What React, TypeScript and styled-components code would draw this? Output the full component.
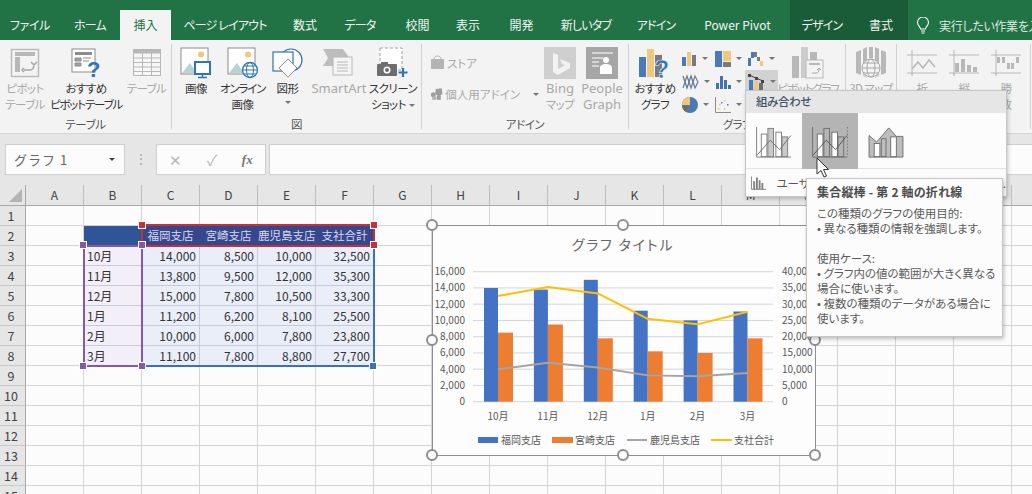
import React from "react";
import styled, { createGlobalStyle } from "styled-components";

const FONT = `"Noto Sans CJK JP", "Noto Sans", sans-serif`;

const Global = createGlobalStyle`
  html, body { margin: 0; padding: 0; background: #fff; }
  body { font-family: ${FONT}; font-feature-settings: "palt"; }
  * { box-sizing: border-box; }
`;

const Page = styled.div`
  position: relative;
  width: 1032px;
  height: 494px;
  overflow: hidden;
  background: #fcfcfc;
  color: #333;
`;

/* ---------- title tabs ---------- */
const TabBar = styled.div`
  display: flex;
  height: 40px;
  background: #217346;
  color: #f0f5f2;
  font-size: 12px;
  overflow: hidden;
`;
const Tab = styled.div<{ $w: number; $active?: boolean; $ctx?: boolean; $gap?: number; $ls?: number }>`
  flex: none;
  width: ${(p) => p.$w}px;
  margin-right: ${(p) => p.$gap ?? 0}px;
  letter-spacing: ${(p) => p.$ls ?? -0.8}px;
  padding-top: 10px;
  height: 40px;
  line-height: 30px;
  text-align: center;
  white-space: nowrap;
  ${(p) => (p.$active ? "background:linear-gradient(#217346 10px,#f3f3f3 10px);color:#217346;" : "")}
  ${(p) => (p.$ctx ? "background:#1b5c38;" : "")}
`;
const TellMe = styled.div`
  flex: none;
  display: flex;
  align-items: center;
  gap: 9px;
  margin-left: 8px;
  height: 40px;
  padding-top: 10px;
  white-space: nowrap;
  letter-spacing: -0.3px;
  color: #dce8e1;
`;

/* ---------- ribbon ---------- */
const Ribbon = styled.div`
  display: flex;
  height: 94px;
  background: #f3f3f3;
  border-bottom: 1px solid #d6d6d6;
  font-size: 12px;
`;
const Group = styled.div<{ $w: number; $pad?: number }>`
  width: ${(p) => p.$w}px;
  flex: none;
  height: 85px;
  margin-top: 4px;
  padding-left: ${(p) => p.$pad ?? 0}px;
  display: flex;
  flex-direction: column;
  border-right: 1px solid #d0d0d0;
`;
const GroupBody = styled.div`
  display: flex;
  flex: 1;
  min-height: 0;
`;
const GroupLabel = styled.div`
  flex: none;
  height: 16px;
  margin-bottom: -3px;
  line-height: 16px;
  text-align: center;
  font-size: 11.5px;
  letter-spacing: -0.4px;
  color: #555;
`;
const BigButton = styled.div<{ $w: number; $off?: boolean }>`
  width: ${(p) => p.$w}px;
  flex: none;
  display: grid;
  grid-template-columns: 100%;
  grid-template-rows: 34px;
  grid-auto-rows: 16px;
  justify-items: center;
  align-content: start;
  padding-top: 2px;
  color: ${(p) => (p.$off ? "#a8a8a8" : "#333")};
  line-height: 16px;
  font-size: 11.5px;
  letter-spacing: -0.55px;
  white-space: nowrap;
  svg { display: block; align-self: center; }
`;
const LatinLabel = styled.div`
  font-family: "Noto Sans", sans-serif;
  font-size: 13px;
  letter-spacing: 0;
`;
const TightLabel = styled.div`
  letter-spacing: -1.2px;
`;
const Stack = styled.div`
  width: 117px;
  flex: none;
  display: flex;
  flex-direction: column;
  gap: 13px;
  padding: 10px 0 0 8px;
  color: #a8a8a8;
  font-size: 11.5px;
`;
const StackRow = styled.div`
  display: flex;
  align-items: center;
  gap: 2px;
  height: 18px;
  white-space: nowrap;
`;
const Caret = styled.span<{ $ml?: number; $dark?: boolean }>`
  display: inline-block;
  width: 0;
  height: 0;
  margin-left: ${(p) => p.$ml ?? 5}px;
  border-left: 3px solid transparent;
  border-right: 3px solid transparent;
  border-top: 3px solid ${(p) => (p.$dark ? "#444" : "#777")};
  flex: none;
  vertical-align: middle;
`;
const ShapeCaret = styled.div`
  line-height: 10px;
`;
const SmallGrid = styled.div`
  flex: none;
  display: grid;
  grid-template-columns: repeat(3, 33px);
  grid-auto-rows: 23px;
  margin: 3px 0 0 -2px;
  align-content: start;
`;
const SmallBtn = styled.div<{ $on?: boolean }>`
  display: flex;
  align-items: center;
  padding-left: 3px;
  height: 23px;
  ${(p) => (p.$on ? "background:#d2d2d2;" : "")}
`;

/* ---------- formula bar ---------- */
const FormulaBar = styled.div`
  display: flex;
  align-items: flex-start;
  height: 51px;
  background: #e6e6e6;
  padding: 10px 0 0 5px;
`;
const NameBox = styled.div`
  display: flex;
  align-items: center;
  justify-content: space-between;
  width: 120px;
  height: 31px;
  padding: 0 9px 0 8px;
  background: #fcfcfc;
  border: 1px solid #cfcfcf;
  font-size: 13px;
  font-feature-settings: normal;
  letter-spacing: 1px;
  color: #666;
`;
const Dots = styled.div`
  width: 31px;
  height: 31px;
  text-align: center;
  line-height: 28px;
  color: #a5a5a5;
  font-size: 12px;
`;
const FxBox = styled.div`
  display: flex;
  align-items: center;
  justify-content: space-around;
  width: 110px;
  height: 31px;
  background: #fcfcfc;
  border: 1px solid #cfcfcf;
  color: #b5b5b5;
  font-size: 15px;
`;
const FxLabel = styled.span`
  font-family: "Liberation Serif", serif;
  font-style: italic;
  font-weight: bold;
  font-size: 13px;
  color: #777;
`;
const FormulaInput = styled.div`
  flex: 1;
  height: 31px;
  margin-left: 3px;
  background: #fcfcfc;
  border: 1px solid #cfcfcf;
  border-right: none;
`;

/* ---------- sheet ---------- */
const Sheet = styled.div`
  display: grid;
  grid-template-columns: 26px repeat(18, 58px);
  grid-template-rows: 21px;
  grid-auto-rows: 20px;
  font-size: 12px;
`;
const Corner = styled.div`
  position: relative;
  background: #e6e6e6;
  border-right: 1px solid #a9a9a9;
  border-bottom: 1px solid #a9a9a9;
  &::after {
    content: "";
    position: absolute;
    right: 3px;
    bottom: 3px;
    width: 0;
    height: 0;
    border-left: 13px solid transparent;
    border-bottom: 13px solid #b4b4b4;
  }
`;
const ColHead = styled.div`
  background: #e6e6e6;
  border-right: 1px solid #bdbdbd;
  border-bottom: 1px solid #a9a9a9;
  text-align: center;
  line-height: 20px;
  font-size: 12px;
  color: #444;
`;
const RowHead = styled.div`
  background: #e6e6e6;
  border-right: 1px solid #a9a9a9;
  border-bottom: 1px solid #c8c8c8;
  text-align: center;
  line-height: 20px;
  font-size: 12.5px;
  padding-right: 3px;
  color: #444;
`;
type Kind = "none" | "blank" | "head" | "month" | "num";
const Cell = styled.div<{ $k: Kind }>`
  border-right: 1px solid ${(p) => (p.$k === "month" || p.$k === "num" ? "#c6cbd8" : "#d4d4d4")};
  border-bottom: 1px solid ${(p) => (p.$k === "month" || p.$k === "num" ? "#c6cbd8" : "#d4d4d4")};
  line-height: 19px;
  white-space: nowrap;
  color: #333;
  ${(p) => p.$k === "blank" && "background:#2f5597;border-color:#2f5597;"}
  ${(p) => p.$k === "head" && "background:#36478c;border-color:#36478c;color:#d4d9ea;text-align:center;font-size:11.5px;"}
  ${(p) => p.$k === "month" && "background:#f3eff8;padding-left:3px;"}
  ${(p) => p.$k === "num" && "background:#e9eef9;text-align:right;padding-right:3px;"}
`;

/* range highlights over the cells */
const Range = styled.div<{ $c: string; $x: number; $y: number; $w: number; $h: number }>`
  position: absolute;
  left: ${(p) => p.$x}px;
  top: ${(p) => p.$y}px;
  width: ${(p) => p.$w}px;
  height: ${(p) => p.$h}px;
  border: 2px solid ${(p) => p.$c};
`;
const Grip = styled.div<{ $c: string; $x: number; $y: number }>`
  position: absolute;
  left: ${(p) => p.$x - 4}px;
  top: ${(p) => p.$y - 4}px;
  width: 8px;
  height: 8px;
  background: ${(p) => p.$c};
  border: 1px solid #fff;
`;

/* ---------- chart ---------- */
const ChartBox = styled.div`
  position: absolute;
  left: 432px;
  top: 225px;
  width: 384px;
  height: 231px;
  background: #fdfdfd;
  border: 1.5px solid #8e8e8e;
  svg { position: absolute; left: -1.5px; top: -1.5px; display: block; overflow: visible; }
`;
const Knob = styled.div<{ $x: number; $y: number }>`
  position: absolute;
  left: ${(p) => p.$x - 6}px;
  top: ${(p) => p.$y - 6}px;
  width: 12px;
  height: 12px;
  border-radius: 50%;
  background: #fdfdfd;
  border: 2px solid #8e8e8e;
`;

/* ---------- gallery dropdown ---------- */
const Menu = styled.div`
  position: absolute;
  left: 745px;
  top: 90px;
  width: 262px;
  height: 107px;
  background: #fcfcfc;
  border: 1px solid #c6c6c6;
  box-shadow: 1px 2px 4px rgba(0, 0, 0, 0.22);
  display: flex;
  flex-direction: column;
`;
const MenuHead = styled.div`
  height: 22px;
  line-height: 21px;
  padding-left: 10px;
  background: #e6e6e6;
  color: #44546a;
  font-size: 11.5px;
  letter-spacing: -0.4px;
  font-weight: 500;
`;
const MenuRow = styled.div`
  display: flex;
  padding-left: 0;
  height: 56px;
  border-bottom: 1px solid #e2e2e2;
`;
const MenuCell = styled.div<{ $on?: boolean }>`
  width: 56px;
  height: 56px;
  display: flex;
  align-items: center;
  justify-content: center;
  padding-top: 3px;
  ${(p) => (p.$on ? "background:#b4b4b4;" : "")}
`;
const MenuFoot = styled.div`
  display: flex;
  align-items: center;
  gap: 10px;
  height: 27px;
  padding-left: 5px;
  font-size: 11.5px;
  white-space: nowrap;
  color: #555;
  overflow: hidden;
`;
const Tip = styled.div`
  position: absolute;
  left: 806px;
  top: 178px;
  width: 197px;
  height: 159px;
  padding: 5px 10px;
  background: #fcfcfc;
  border: 1px solid #c6c6c6;
  box-shadow: 1px 2px 4px rgba(0, 0, 0, 0.25);
  font-size: 11.5px;
  line-height: 15px;
  color: #5a5a5a;
  white-space: nowrap;
`;
const TipTitle = styled.div`
  font-weight: 700;
  font-size: 12px;
  letter-spacing: 0.2px;
  color: #4c4c4c;
  margin-bottom: 6px;
  line-height: 16px;
`;
const TipGap = styled.div`
  height: 15px;
`;
const Pointer = styled.svg`
  position: absolute;
  left: 816px;
  top: 157px;
`;

/* ---------- ribbon icons ---------- */
const G = "#b8b8b8";
const IconPivot = () => (
  <svg width="30" height="30" viewBox="0 0 30 30">
    <rect x="1.5" y="1.5" width="27" height="27" fill="#f3f3f3" stroke={G} strokeWidth="1.4" />
    <rect x="5" y="4" width="20" height="4" fill={G} />
    <rect x="5" y="9" width="5" height="15" fill={G} />
    <path d="M14 22h6c2 0 4-2 4-6M21 14l3 3 3-3M14 20l-2 2 2 2" fill="none" stroke="#a8a8a8" strokeWidth="1.5" />
  </svg>
);
const IconRecPivot = () => (
  <svg width="30" height="30" viewBox="0 0 30 30">
    <rect x="1" y="1" width="23" height="23" fill="#fff" stroke="#8c8c8c" />
    <rect x="4" y="4" width="17" height="3" fill="#8c8c8c" />
    <path d="M4 10h6v3H4zM4 15h6v3H4zM12 10h8M12 13h6" stroke="#8c8c8c" fill="#a0a0a0" />
    <text x="16" y="29" fontSize="22" fontWeight="700" fill="#2f74b5" fontFamily="Liberation Sans, sans-serif">?</text>
  </svg>
);
const IconTable = () => (
  <svg width="30" height="30" viewBox="0 0 30 30">
    <rect x="1.5" y="1.5" width="27" height="26" fill="#f6f6f6" stroke={G} />
    <rect x="1.5" y="1.5" width="27" height="4" fill={G} />
    <path d="M10.5 2v25M19.5 2v25M2 10h26M2 14.5h26M2 19h26M2 23.500h26" stroke={G} fill="none" />
  </svg>
);
const Landscape = () => (
  <>
    <rect x="1" y="1" width="27" height="26" fill="#fff" stroke="#8c8c8c" />
    <path d="M2 26l8-10 7 10z" fill="#b6d3d6" />
    <circle cx="21" cy="7.500" r="3" fill="#edc87e" />
  </>
);
const IconPicture = () => (
  <svg width="32" height="32" viewBox="0 0 32 32">
    <Landscape />
    <rect x="15" y="15" width="15" height="12" fill="#fff" stroke="#2f74b5" strokeWidth="2" />
    <path d="M22.500 27v3M18 30.500h9" stroke="#2f74b5" strokeWidth="1.500" />
  </svg>
);
const IconOnline = () => (
  <svg width="32" height="32" viewBox="0 0 32 32">
    <Landscape />
    <circle cx="23" cy="23" r="7.500" fill="#fff" stroke="#2f74b5" strokeWidth="1.300" />
    <ellipse cx="23" cy="23" rx="3.500" ry="7.500" fill="none" stroke="#2f74b5" />
    <path d="M15.500 23h15M17 19h12M17 27h12" stroke="#2f74b5" />
  </svg>
);
const IconShapes = () => (
  <svg width="32" height="32" viewBox="0 0 32 32">
    <circle cx="19" cy="13" r="11" fill="#fff" stroke="#2f74b5" strokeWidth="1.200" />
    <rect x="1" y="5" width="20" height="19" fill="#fff" stroke="#2f74b5" strokeWidth="1.200" />
    <path d="M16 12l9 9-9 9-9-9z" fill="#fff" stroke="#8c8c8c" />
  </svg>
);
const IconSmartArt = () => (
  <svg width="32" height="32" viewBox="0 0 32 32">
    <path d="M0 2h20l7 10h-7L20 19H0l5-8z" fill="#bdbdbd" />
    <rect x="10" y="10" width="19" height="18" fill="#f5f5f5" stroke={G} />
    <path d="M14 15h11M14 18h11M14 21h11M14 24h11" stroke={G} />
  </svg>
);
const IconScreenshot = () => (
  <svg width="32" height="32" viewBox="0 0 32 32">
    <rect x="3" y="1" width="22" height="22" fill="#fff" stroke="#a0a0a0" strokeDasharray="3 2" />
    <rect x="0" y="17" width="20" height="12" rx="1" fill="#6e6e6e" />
    <rect x="4" y="15" width="7" height="3" fill="#6e6e6e" />
    <circle cx="10" cy="23" r="3.500" fill="#fff" />
    <circle cx="10" cy="23" r="2" fill="#6e6e6e" />
    <path d="M26 21v9M21.500 25.500h9" stroke="#2f74b5" strokeWidth="2.200" />
  </svg>
);
const IconStore = () => (
  <svg width="15" height="16" viewBox="0 0 15 16">
    <path d="M1 4h13v10H1z" fill="#b4b4b4" />
    <path d="M4 4c0-4 7-4 7 0" stroke="#b4b4b4" fill="none" />
  </svg>
);
const IconAddin = () => (
  <svg width="16" height="16" viewBox="0 0 16 16">
    <path d="M7 2l7-1 1 7-4 3-5-3z" fill="#9e9e9e" />
    <circle cx="4" cy="9" r="3" fill="#9e9e9e" />
    <circle cx="5" cy="13" r="2.500" fill="#b4b4b4" />
    <rect x="8" y="10" width="5" height="5" fill="#9e9e9e" />
  </svg>
);
const IconBing = () => (
  <svg width="32" height="32" viewBox="0 0 32 32">
    <rect width="32" height="32" fill="#cfcfcf" />
    <path d="M9 6l5 2v14l7-4-3-1-2-5 10 4v5l-12 7-5-3z" fill="#f2f2f2" />
  </svg>
);
const IconPeople = () => (
  <svg width="32" height="32" viewBox="0 0 32 32">
    <rect width="32" height="32" fill="#a6a6a6" />
    <path d="M6 6h21M6 11h11M6 15h7M6 19h7" stroke="#d4d4d4" strokeWidth="2" />
    <circle cx="20" cy="13" r="3" fill="#fff" />
    <path d="M14 27v-6c0-3 3-4 6-4s6 1 6 4v6z" fill="#fff" />
  </svg>
);
const IconRecChart = () => (
  <svg width="32" height="32" viewBox="0 0 32 32">
    <rect x="0" y="10" width="7" height="20" fill="#4a7ab5" />
    <rect x="8" y="2" width="7" height="28" fill="#edc87e" />
    <rect x="16" y="8" width="7" height="22" fill="#7a7a7a" />
    <text x="15" y="31" fontSize="25" fontWeight="700" fill="#2f74b5" stroke="#fff" strokeWidth=".5" fontFamily="Liberation Sans, sans-serif">?</text>
  </svg>
);
const MiniBars = () => (
  <svg width="15" height="16" viewBox="0 0 15 16">
    <rect x="0" y="6" width="4" height="9" fill="#4a7ab5" />
    <rect x="5" y="1" width="4" height="14" fill="#edc87e" />
    <rect x="10" y="4" width="4" height="11" fill="#7a7a7a" />
  </svg>
);
const MiniTree = () => (
  <svg width="16" height="16" viewBox="0 0 16 16">
    <rect x="0" y="0" width="7" height="16" fill="#4a7ab5" />
    <rect x="8" y="0" width="8" height="10" fill="#edc87e" />
    <rect x="8" y="11" width="8" height="5" fill="#7a7a7a" />
  </svg>
);
const MiniStep = () => (
  <svg width="16" height="16" viewBox="0 0 16 16">
    <rect x="0" y="7" width="3" height="8" fill="#4a7ab5" />
    <rect x="3" y="1" width="3" height="6" fill="#4a7ab5" />
    <rect x="6" y="1" width="3" height="5" fill="#7a7a7a" />
    <rect x="9" y="6" width="3" height="4" fill="#7a7a7a" />
    <rect x="12" y="10" width="3" height="5" fill="#edc87e" />
  </svg>
);
const MiniLines = () => (
  <svg width="17" height="16" viewBox="0 0 17 16">
    <path d="M1 2l4 12 4-12 4 12 3-6" fill="none" stroke="#4a7ab5" strokeWidth="1.200" />
    <path d="M1 14l4-12 4 12 4-12 3 6" fill="none" stroke="#7a7a7a" strokeWidth="1.200" />
  </svg>
);
const MiniHisto = () => (
  <svg width="16" height="16" viewBox="0 0 16 16">
    <path d="M1 9h3v6H1zM5 2h3v13H5zM9 6h3v9H9zM13 11h3v4h-3z" fill="#3f74ad" />
  </svg>
);
const MiniPie = () => (
  <svg width="16" height="16" viewBox="0 0 16 16">
    <circle cx="8" cy="8" r="8" fill="#4a7ab5" />
    <path d="M8 8V0a8 8 0 0 0-8 8z" fill="#edc87e" />
    <path d="M8 8H0a8 8 0 0 0 4 7z" fill="#6e6e6e" />
  </svg>
);
const MiniScatter = () => (
  <svg width="16" height="16" viewBox="0 0 16 16">
    <path d="M.5 0v15.500H16" fill="none" stroke="#8c8c8c" />
    <path d="M3 11h1.500v1.500H3zM9 11h1.500v1.500H9z" fill="#edc87e" />
    <path d="M6 5h1.500v1.500H6zM12 7h1.500v1.500H12z" fill="#4a7ab5" />
    <path d="M9 3h1.500v1.500H9zM4 7h1.500v1.500H4z" fill="#edc87e" />
  </svg>
);
const MiniCombo = () => (
  <svg width="17" height="18" viewBox="0 0 17 18">
    <rect x="1" y="7" width="4" height="11" fill="#4a7ab5" />
    <rect x="6" y="8" width="4" height="10" fill="#edc87e" />
    <rect x="11" y="10" width="4" height="8" fill="#6e6e6e" />
    <path d="M1 2l7 3 7 3" fill="none" stroke="#444" />
    <path d="M0 1h3v3H0zM7 4h3v3H7zM13 7h3v3h-3z" fill="#444" />
  </svg>
);
const IconPivotChart = () => (
  <svg width="32" height="34" viewBox="0 0 32 34">
    <rect x="0" y="10" width="7" height="22" fill={G} />
    <rect x="9" y="1" width="7" height="31" fill="#cccccc" />
    <rect x="18" y="6" width="7" height="26" fill={G} />
    <rect x="14" y="14" width="17" height="18" fill="#f3f3f3" stroke={G} />
    <rect x="17" y="17" width="11" height="2" fill={G} />
    <path d="M20 27h4c2 0 3-1 3-4M25 24l2-2 2 2" fill="none" stroke="#a8a8a8" />
  </svg>
);
const Icon3D = () => (
  <svg width="32" height="34" viewBox="0 0 32 34">
    <path d="M1 6l5-2v25l-5-2zM26 4l5 2v21l-5 2zM8 3l4-2v13l-4 4zM14 1h4v11h-4zM20 1l4 2v15l-4-4z" fill={G} />
    <path d="M8 22v8l4 2zM24 22v8l-4 2z" fill="#cdcdcd" />
    <circle cx="16" cy="22" r="9" fill="#f3f3f3" stroke="#a8a8a8" />
    <ellipse cx="16" cy="22" rx="4" ry="9" fill="none" stroke="#a8a8a8" />
    <path d="M7 22h18M8.500 17h15M8.500 27h15" stroke="#a8a8a8" />
  </svg>
);
const SparkFrame = () => (
  <path d="M0 5h30M5 0v25M0 23h30M5 23v3" fill="none" stroke={G} strokeWidth="1" />
);
const IconSparkLine = () => (
  <svg width="30" height="27" viewBox="0 0 30 27">
    <SparkFrame />
    <path d="M5 19l6-7 5 6 6-8 6 7" fill="none" stroke={G} strokeWidth="1.500" />
  </svg>
);
const IconSparkBar = () => (
  <svg width="30" height="27" viewBox="0 0 30 27">
    <SparkFrame />
    <path d="M6 13h4v9H6zM12 9h4v13h-4zM18 15h4v7h-4zM24 17h4v5h-4z" fill={G} />
  </svg>
);
const IconSparkWin = () => (
  <svg width="30" height="27" viewBox="0 0 30 27">
    <SparkFrame />
    <path d="M6 7h3v6H6zM11 7h3v6h-3zM16 13h3v6h-3zM20 13h3v6h-3zM25 7h3v6h-3z" fill={G} />
  </svg>
);

const ComboA = () => (
  <svg width="38" height="32" viewBox="0 0 38 34">
    <path d="M.5 0v32M.5 32H37" stroke="#7f7f7f" fill="none" />
    <g fill="#cacaca" stroke="#7f7f7f">
      <rect x="5.500" y="7.500" width="6" height="24" fill="#fff" />
      <rect x="12.500" y="1.500" width="6" height="30" />
      <rect x="21" y="5.500" width="6" height="26" fill="#fff" />
      <rect x="27.500" y="10.500" width="6" height="21" />
    </g>
    <path d="M1 30l14-16 10 10 12-15" fill="none" stroke="#6e6e6e" />
  </svg>
);
const ComboB = () => (
  <svg width="38" height="32" viewBox="0 0 38 34">
    <path d="M.5 0v32M.5 32H37" stroke="#6e6e6e" fill="none" />
    <path d="M37.500 0v32" stroke="#6e6e6e" strokeDasharray="1.500 2" />
    <g stroke="#6e6e6e">
      <rect x="5.500" y="7.500" width="6" height="24" fill="#fff" />
      <rect x="12.500" y="1.500" width="6" height="30" fill="#b4b4b4" />
      <rect x="21" y="5.500" width="6" height="26" fill="#fff" />
      <rect x="27.500" y="10.500" width="6" height="21" fill="#b4b4b4" />
    </g>
    <path d="M1 30l14-16 10 10 12-15" fill="none" stroke="#555" />
  </svg>
);
const ComboC = () => (
  <svg width="38" height="32" viewBox="0 0 38 34">
    <path d="M1 9l8 7 13-15 8 9h7v22H1z" fill="#bdbdbd" stroke="#6e6e6e" />
    <g stroke="#6e6e6e" fill="#fff">
      <rect x="6.500" y="17.500" width="6" height="14" />
      <rect x="14" y="12.500" width="5" height="19" fill="#bdbdbd" />
      <rect x="24" y="10.500" width="6" height="21" />
    </g>
  </svg>
);
const IconCustom = () => (
  <svg width="17" height="16" viewBox="0 0 17 16">
    <path d="M.5 1v14H17" stroke="#7f7f7f" fill="none" />
    <path d="M3.500 6v9M6.500 2v13M9.500 5v10M12.500 8v7" stroke="#7f7f7f" strokeWidth="2" />
  </svg>
);

/* ---------- data ---------- */
const cols = "ABCDEFGHIJKLMNOPQR".split("");
const heads = ["福岡支店", "宮崎支店", "鹿児島支店", "支社合計"];
const table = [
  { m: "10月", v: [14000, 8500, 10000, 32500] },
  { m: "11月", v: [13800, 9500, 12000, 35300] },
  { m: "12月", v: [15000, 7800, 10500, 33300] },
  { m: "1月", v: [11200, 6200, 8100, 25500] },
  { m: "2月", v: [10000, 6000, 7800, 23800] },
  { m: "3月", v: [11100, 7800, 8800, 27700] },
];
const fmt = (n: number) => n.toLocaleString("en-US");

const Chart = () => {
  const ox = 432;
  const oy = 225;
  const base = 401.7 - oy;
  const yL = (v: number) => base - (v / 16000) * 130;
  const yR = (v: number) => base - (v / 40000) * 130;
  const cx = (i: number) => 498 + 49.9 * i - ox;
  const line = (k: number) => table.map((r, i) => `${cx(i)},${yR(r.v[k])}`).join(" ");
  const txt = { fontFamily: FONT, fontSize: 10, fill: "#595959" };
  return (
    <svg width="384" height="231" viewBox="0 0 384 231">
      <text x="191" y="25" textAnchor="middle" fontFamily={FONT} fontSize="14" letterSpacing="1.8" fill="#666">グラフ タイトル</text>
      {[0, 2000, 4000, 6000, 8000, 10000, 12000, 14000, 16000].map((v) => (
        <g key={v}>
          <line x1="41" x2="341" y1={yL(v)} y2={yL(v)} stroke="#d5d5d5" />
          <text {...txt} x="33" y={yL(v) + 3.500} textAnchor="end">{fmt(v)}</text>
          <text {...txt} x="350" y={yL(v) + 3.500}>{fmt(v * 2.5)}</text>
        </g>
      ))}
      {table.map((r, i) => (
        <g key={r.m}>
          <rect x={cx(i) - 14} y={yL(r.v[0])} width="14" height={base - yL(r.v[0])} fill="#4472c4" />
          <rect x={cx(i)} y={yL(r.v[1])} width="15" height={base - yL(r.v[1])} fill="#ed7d31" />
          <text {...txt} x={cx(i)} y="195" textAnchor="middle">{r.m}</text>
        </g>
      ))}
      <polyline points={line(2)} fill="none" stroke="#a5a5a5" strokeWidth="2" strokeLinejoin="round" />
      <polyline points={line(3)} fill="none" stroke="#ffc000" strokeWidth="2" strokeLinejoin="round" />
      <rect x="46" y="212" width="20" height="6" fill="#4472c4" />
      <text {...txt} x="69" y="219">福岡支店</text>
      <rect x="120" y="212" width="21" height="6" fill="#ed7d31" />
      <text {...txt} x="143" y="219">宮崎支店</text>
      <line x1="195" x2="215" y1="215" y2="215" stroke="#a5a5a5" strokeWidth="2" />
      <text {...txt} x="218" y="219">鹿児島支店</text>
      <line x1="279" x2="300" y1="215" y2="215" stroke="#ffc000" strokeWidth="2" />
      <text {...txt} x="302" y="219">支社合計</text>
    </svg>
  );
};

const knobs: [number, number][] = [
  [0, 0], [191, 0], [383, 0],
  [0, 115], [383, 115],
  [0, 230], [191, 230], [383, 230],
];

const RED = "#c0323c";
const PURPLE = "#8659a8";
const BLUE = "#3a6fc4";

const App = () => (
  <Page>
    <Global />
    <TabBar>
      <Tab $w={60} $ls={-0.4}>ファイル</Tab>
      <Tab $w={60}>ホーム</Tab>
      <Tab $w={51} $ls={0} $active>挿入</Tab>
      <Tab $w={108}>ページ レイアウト</Tab>
      <Tab $w={52} $ls={0}>数式</Tab>
      <Tab $w={58}>データ</Tab>
      <Tab $w={57} $ls={0}>校閲</Tab>
      <Tab $w={44} $ls={0}>表示</Tab>
      <Tab $w={63} $ls={0}>開発</Tab>
      <Tab $w={66}>新しいタブ</Tab>
      <Tab $w={74}>アドイン</Tab>
      <Tab $w={89} $gap={8} $ls={0}>Power Pivot</Tab>
      <Tab $w={64} $ctx>デザイン</Tab>
      <Tab $w={54} $ls={0} $ctx>書式</Tab>
      <TellMe>
        <svg width="14" height="17" viewBox="0 0 14 17">
          <path d="M4.500 12c0-2-3-3.500-3-6.500a5.500 5.500 0 0 1 11 0c0 3-3 4.500-3 6.500zM5 14h4M5.500 16h3" fill="none" stroke="#fff" strokeWidth="1.100" />
        </svg>
        実行したい作業を入力してください
      </TellMe>
    </TabBar>

    <Ribbon>
      <Group $w={172}>
        <GroupBody>
          <BigButton $w={50} $off><IconPivot /><div>ピボット</div><div>テーブル</div></BigButton>
          <BigButton $w={72}><IconRecPivot /><div>おすすめ</div><TightLabel>ピボットテーブル</TightLabel></BigButton>
          <BigButton $w={49} $off><IconTable /><div>テーブル</div></BigButton>
        </GroupBody>
        <GroupLabel>テーブル</GroupLabel>
      </Group>
      <Group $w={250}>
        <GroupBody>
          <BigButton $w={48}><IconPicture /><div>画像</div></BigButton>
          <BigButton $w={45}><IconOnline /><TightLabel>オンライン</TightLabel><div>画像</div></BigButton>
          <BigButton $w={45}><IconShapes /><div>図形</div><ShapeCaret><Caret $ml={0} /></ShapeCaret></BigButton>
          <BigButton $w={58} $off><IconSmartArt /><LatinLabel>SmartArt</LatinLabel></BigButton>
          <BigButton $w={50}><IconScreenshot /><div>スクリーン</div><div>ショット<Caret $ml={3} /></div></BigButton>
        </GroupBody>
        <GroupLabel>図</GroupLabel>
      </Group>
      <Group $w={207}>
        <GroupBody>
          <Stack>
            <StackRow><IconStore />ストア</StackRow>
            <StackRow><IconAddin />個人用アドイン<Caret $ml={11} /></StackRow>
          </Stack>
          <BigButton $w={42} $off><IconBing /><LatinLabel>Bing</LatinLabel><div>マップ</div></BigButton>
          <BigButton $w={42} $off><IconPeople /><LatinLabel>People</LatinLabel><LatinLabel>Graph</LatinLabel></BigButton>
        </GroupBody>
        <GroupLabel>アドイン</GroupLabel>
      </Group>
      <Group $w={217}>
        <GroupBody>
          <BigButton $w={52}><IconRecChart /><div>おすすめ</div><div>グラフ</div></BigButton>
          <SmallGrid>
            <SmallBtn><MiniBars /><Caret /></SmallBtn>
            <SmallBtn><MiniTree /><Caret /></SmallBtn>
            <SmallBtn><MiniStep /><Caret /></SmallBtn>
            <SmallBtn><MiniLines /><Caret /></SmallBtn>
            <SmallBtn><MiniHisto /><Caret /></SmallBtn>
            <SmallBtn $on><MiniCombo /><Caret /></SmallBtn>
            <SmallBtn><MiniPie /><Caret /></SmallBtn>
            <SmallBtn><MiniScatter /><Caret /></SmallBtn>
          </SmallGrid>
          <BigButton $w={60} $off><IconPivotChart /><TightLabel>ピボットグラフ</TightLabel></BigButton>
        </GroupBody>
        <GroupLabel>グラフ</GroupLabel>
      </Group>
      <Group $w={51}>
        <GroupBody>
          <BigButton $w={50} $off><Icon3D /><div>3D マップ</div></BigButton>
        </GroupBody>
      </Group>
      <Group $w={134} $pad={4}>
        <GroupBody>
          <BigButton $w={42} $off><IconSparkLine /><div>折</div><div>れ線</div></BigButton>
          <BigButton $w={42} $off><IconSparkBar /><div>縦</div><div>棒</div></BigButton>
          <BigButton $w={42} $off><IconSparkWin /><div>勝</div><div>敗</div></BigButton>
        </GroupBody>
      </Group>
    </Ribbon>

    <FormulaBar>
      <NameBox>グラフ 1<Caret $dark /></NameBox>
      <Dots>⋮</Dots>
      <FxBox>
        <span>✕</span>
        <span>✓</span>
        <FxLabel>fx</FxLabel>
      </FxBox>
      <FormulaInput />
    </FormulaBar>

    <Sheet>
      <Corner />
      {cols.map((c) => <ColHead key={c}>{c}</ColHead>)}
      {Array.from({ length: 15 }, (_, i) => i + 1).map((n) => {
        const rec = n >= 3 && n <= 8 ? table[n - 3] : null;
        return (
          <React.Fragment key={n}>
            <RowHead>{n}</RowHead>
            {cols.map((_, c) => {
              let kind: Kind = "none";
              let body: React.ReactNode = null;
              if (n === 2 && c === 1) kind = "blank";
              if (n === 2 && c >= 2 && c <= 5) {
                kind = "head";
                body = heads[c - 2];
              }
              if (rec && c === 1) {
                kind = "month";
                body = rec.m;
              }
              if (rec && c >= 2 && c <= 5) {
                kind = "num";
                body = fmt(rec.v[c - 2]);
              }
              return <Cell key={c} $k={kind}>{body}</Cell>;
            })}
          </React.Fragment>
        );
      })}
    </Sheet>

    <Range $c={BLUE} $x={141} $y={245} $w={234} $h={122} />
    <Range $c={PURPLE} $x={83} $y={245} $w={60} $h={122} />
    <Range $c={RED} $x={141} $y={224} $w={234} $h={23} />
    {[[374, 225], [374, 245], [142, 225]].map(([x, y]) => <Grip key={`r${x}${y}`} $c={RED} $x={x} $y={y} />)}
    {[[83, 245], [142, 245], [83, 366], [142, 366]].map(([x, y]) => <Grip key={`p${x}${y}`} $c={PURPLE} $x={x} $y={y} />)}
    <Grip $c={BLUE} $x={373} $y={366} />

    <ChartBox>
      <Chart />
    </ChartBox>
    {knobs.map(([x, y]) => <Knob key={`${x}-${y}`} $x={432 + x} $y={225 + y} />)}

    <Menu>
      <MenuHead>組み合わせ</MenuHead>
      <MenuRow>
        <MenuCell><ComboA /></MenuCell>
        <MenuCell $on><ComboB /></MenuCell>
        <MenuCell><ComboC /></MenuCell>
      </MenuRow>
      <MenuFoot><IconCustom />ユーザー設定の組み合わせグラフを作成する...</MenuFoot>
    </Menu>

    <Tip>
      <TipTitle>集合縦棒 - 第 2 軸の折れ線</TipTitle>
      <div>この種類のグラフの使用目的:</div>
      <div>• 異なる種類の情報を強調します。</div>
      <TipGap />
      <div>使用ケース:</div>
      <div>• グラフ内の値の範囲が大きく異なる</div>
      <div>場合に使います。</div>
      <div>• 複数の種類のデータがある場合に</div>
      <div>使います。</div>
    </Tip>

    <Pointer width="14" height="22" viewBox="0 0 14 22">
      <path d="M1 1v16l4-3.500 3 6.500 2.500-1-3-6.500h5z" fill="#fff" stroke="#333" strokeWidth="1" />
    </Pointer>
  </Page>
);

export default App;
